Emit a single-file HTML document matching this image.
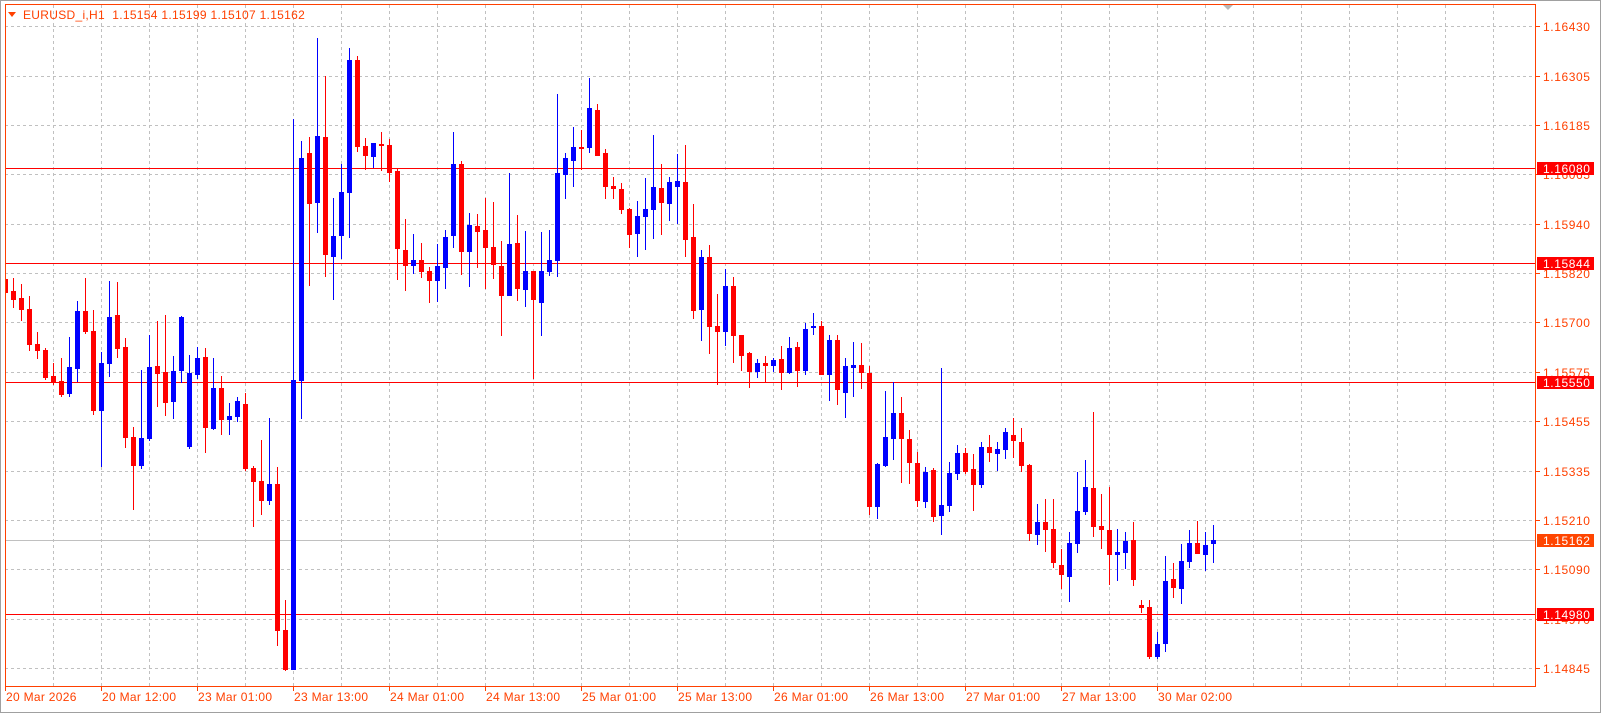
<!DOCTYPE html>
<html><head><meta charset="utf-8"><style>
html,body{margin:0;padding:0;background:#fff;}
svg{display:block;font-family:"Liberation Sans",sans-serif;}
</style></head><body>
<svg width="1601" height="713" viewBox="0 0 1601 713" xmlns="http://www.w3.org/2000/svg">
<rect x="0" y="0" width="1601" height="713" fill="#fff"/>
<rect x="0.5" y="0.5" width="1600" height="712" fill="none" stroke="#a0a0a0"/>
<defs><clipPath id="pc"><rect x="5" y="4" width="1531" height="683"/></clipPath></defs>
<g stroke="#c0c0c0" stroke-width="1" stroke-dasharray="3,3">
<path d="M5 26.5H1536M5 76.5H1536M5 125.5H1536M5 174.5H1536M5 224.5H1536M5 273.5H1536M5 322.5H1536M5 372.5H1536M5 421.5H1536M5 471.5H1536M5 520.5H1536M5 569.5H1536M5 619.5H1536M5 668.5H1536"/>
<path d="M53.5 5V687M101.5 5V687M149.5 5V687M197.5 5V687M245.5 5V687M293.5 5V687M341.5 5V687M389.5 5V687M437.5 5V687M485.5 5V687M533.5 5V687M581.5 5V687M629.5 5V687M677.5 5V687M725.5 5V687M773.5 5V687M821.5 5V687M869.5 5V687M917.5 5V687M965.5 5V687M1013.5 5V687M1061.5 5V687M1109.5 5V687M1157.5 5V687M1205.5 5V687M1253.5 5V687M1301.5 5V687M1349.5 5V687M1397.5 5V687M1445.5 5V687M1493.5 5V687"/>
</g>
<path d="M5 540.5H1536" stroke="#c0c0c0"/>
<g stroke="#ff0000" stroke-width="1">
<path d="M5 168.5H1536M5 263.5H1536M5 382.5H1536M5 614.5H1536"/>
</g>
<g clip-path="url(#pc)">
<g fill="#ff0000">
<rect x="5" y="223" width="1" height="72"/><rect x="3" y="279" width="5" height="14"/>
<rect x="13" y="278" width="1" height="30"/><rect x="11" y="291" width="5" height="9"/>
<rect x="21" y="284" width="1" height="37"/><rect x="19" y="298" width="5" height="12"/>
<rect x="29" y="296" width="1" height="55"/><rect x="27" y="309" width="5" height="36"/>
<rect x="37" y="332" width="1" height="27"/><rect x="35" y="344" width="5" height="7"/>
<rect x="45" y="348" width="1" height="32"/><rect x="43" y="350" width="5" height="28"/>
<rect x="53" y="363" width="1" height="22"/><rect x="51" y="376" width="5" height="6"/>
<rect x="61" y="358" width="1" height="39"/><rect x="59" y="381" width="5" height="14"/>
<rect x="85" y="278" width="1" height="56"/><rect x="83" y="311" width="5" height="21"/>
<rect x="93" y="310" width="1" height="105"/><rect x="91" y="331" width="5" height="80"/>
<rect x="117" y="282" width="1" height="76"/><rect x="115" y="315" width="5" height="34"/>
<rect x="125" y="338" width="1" height="110"/><rect x="123" y="347" width="5" height="91"/>
<rect x="133" y="427" width="1" height="83"/><rect x="131" y="437" width="5" height="29"/>
<rect x="157" y="321" width="1" height="86"/><rect x="155" y="366" width="5" height="8"/>
<rect x="165" y="315" width="1" height="101"/><rect x="163" y="372" width="5" height="31"/>
<rect x="205" y="348" width="1" height="105"/><rect x="203" y="357" width="5" height="71"/>
<rect x="221" y="376" width="1" height="59"/><rect x="219" y="388" width="5" height="32"/>
<rect x="245" y="393" width="1" height="78"/><rect x="243" y="404" width="5" height="65"/>
<rect x="253" y="466" width="1" height="61"/><rect x="251" y="468" width="5" height="14"/>
<rect x="261" y="440" width="1" height="75"/><rect x="259" y="481" width="5" height="20"/>
<rect x="277" y="467" width="1" height="179"/><rect x="275" y="484" width="5" height="147"/>
<rect x="285" y="600" width="1" height="71"/><rect x="283" y="630" width="5" height="40"/>
<rect x="309" y="137" width="1" height="149"/><rect x="307" y="153" width="5" height="51"/>
<rect x="325" y="76" width="1" height="201"/><rect x="323" y="137" width="5" height="118"/>
<rect x="357" y="56" width="1" height="96"/><rect x="355" y="60" width="5" height="87"/>
<rect x="365" y="138" width="1" height="32"/><rect x="363" y="146" width="5" height="10"/>
<rect x="381" y="132" width="1" height="39"/><rect x="379" y="144" width="5" height="2"/>
<rect x="389" y="139" width="1" height="43"/><rect x="387" y="145" width="5" height="28"/>
<rect x="397" y="168" width="1" height="112"/><rect x="395" y="171" width="5" height="78"/>
<rect x="405" y="219" width="1" height="72"/><rect x="403" y="250" width="5" height="16"/>
<rect x="421" y="243" width="1" height="35"/><rect x="419" y="260" width="5" height="12"/>
<rect x="429" y="267" width="1" height="36"/><rect x="427" y="271" width="5" height="10"/>
<rect x="461" y="161" width="1" height="114"/><rect x="459" y="164" width="5" height="88"/>
<rect x="477" y="214" width="1" height="54"/><rect x="475" y="226" width="5" height="6"/>
<rect x="485" y="198" width="1" height="91"/><rect x="483" y="230" width="5" height="18"/>
<rect x="493" y="202" width="1" height="77"/><rect x="491" y="247" width="5" height="18"/>
<rect x="501" y="241" width="1" height="95"/><rect x="499" y="266" width="5" height="30"/>
<rect x="517" y="215" width="1" height="86"/><rect x="515" y="243" width="5" height="46"/>
<rect x="533" y="271" width="1" height="108"/><rect x="531" y="271" width="5" height="29"/>
<rect x="581" y="130" width="1" height="40"/><rect x="579" y="147" width="5" height="2"/>
<rect x="597" y="104" width="1" height="52"/><rect x="595" y="110" width="5" height="46"/>
<rect x="605" y="149" width="1" height="50"/><rect x="603" y="153" width="5" height="34"/>
<rect x="613" y="177" width="1" height="22"/><rect x="611" y="186" width="5" height="3"/>
<rect x="621" y="183" width="1" height="31"/><rect x="619" y="189" width="5" height="21"/>
<rect x="629" y="208" width="1" height="40"/><rect x="627" y="209" width="5" height="26"/>
<rect x="661" y="164" width="1" height="71"/><rect x="659" y="188" width="5" height="15"/>
<rect x="685" y="145" width="1" height="112"/><rect x="683" y="182" width="5" height="58"/>
<rect x="693" y="204" width="1" height="115"/><rect x="691" y="237" width="5" height="74"/>
<rect x="709" y="245" width="1" height="109"/><rect x="707" y="257" width="5" height="70"/>
<rect x="717" y="294" width="1" height="91"/><rect x="715" y="326" width="5" height="6"/>
<rect x="733" y="277" width="1" height="86"/><rect x="731" y="286" width="5" height="50"/>
<rect x="741" y="335" width="1" height="36"/><rect x="739" y="335" width="5" height="21"/>
<rect x="749" y="352" width="1" height="36"/><rect x="747" y="353" width="5" height="19"/>
<rect x="765" y="356" width="1" height="27"/><rect x="763" y="363" width="5" height="3"/>
<rect x="781" y="346" width="1" height="44"/><rect x="779" y="359" width="5" height="14"/>
<rect x="797" y="342" width="1" height="45"/><rect x="795" y="347" width="5" height="24"/>
<rect x="821" y="321" width="1" height="54"/><rect x="819" y="326" width="5" height="49"/>
<rect x="837" y="335" width="1" height="70"/><rect x="835" y="340" width="5" height="50"/>
<rect x="861" y="343" width="1" height="46"/><rect x="859" y="365" width="5" height="8"/>
<rect x="869" y="366" width="1" height="149"/><rect x="867" y="373" width="5" height="134"/>
<rect x="901" y="397" width="1" height="86"/><rect x="899" y="413" width="5" height="26"/>
<rect x="909" y="430" width="1" height="54"/><rect x="907" y="439" width="5" height="24"/>
<rect x="917" y="452" width="1" height="55"/><rect x="915" y="463" width="5" height="38"/>
<rect x="933" y="468" width="1" height="54"/><rect x="931" y="470" width="5" height="47"/>
<rect x="965" y="448" width="1" height="26"/><rect x="963" y="453" width="5" height="19"/>
<rect x="973" y="454" width="1" height="57"/><rect x="971" y="469" width="5" height="16"/>
<rect x="989" y="435" width="1" height="27"/><rect x="987" y="447" width="5" height="6"/>
<rect x="1013" y="418" width="1" height="40"/><rect x="1011" y="435" width="5" height="6"/>
<rect x="1021" y="428" width="1" height="44"/><rect x="1019" y="442" width="5" height="24"/>
<rect x="1029" y="464" width="1" height="77"/><rect x="1027" y="465" width="5" height="69"/>
<rect x="1045" y="499" width="1" height="53"/><rect x="1043" y="522" width="5" height="8"/>
<rect x="1053" y="499" width="1" height="69"/><rect x="1051" y="529" width="5" height="34"/>
<rect x="1061" y="549" width="1" height="40"/><rect x="1059" y="565" width="5" height="10"/>
<rect x="1093" y="412" width="1" height="125"/><rect x="1091" y="488" width="5" height="39"/>
<rect x="1101" y="494" width="1" height="55"/><rect x="1099" y="526" width="5" height="4"/>
<rect x="1109" y="487" width="1" height="98"/><rect x="1107" y="530" width="5" height="25"/>
<rect x="1133" y="522" width="1" height="64"/><rect x="1131" y="540" width="5" height="40"/>
<rect x="1141" y="600" width="1" height="13"/><rect x="1139" y="605" width="5" height="3"/>
<rect x="1149" y="600" width="1" height="59"/><rect x="1147" y="607" width="5" height="50"/>
<rect x="1173" y="563" width="1" height="35"/><rect x="1171" y="579" width="5" height="9"/>
<rect x="1197" y="521" width="1" height="33"/><rect x="1195" y="543" width="5" height="11"/>
</g>
<g fill="#0000ff">
<rect x="69" y="337" width="1" height="60"/><rect x="67" y="367" width="5" height="27"/>
<rect x="77" y="301" width="1" height="81"/><rect x="75" y="311" width="5" height="58"/>
<rect x="101" y="352" width="1" height="115"/><rect x="99" y="363" width="5" height="48"/>
<rect x="109" y="281" width="1" height="96"/><rect x="107" y="317" width="5" height="47"/>
<rect x="141" y="370" width="1" height="99"/><rect x="139" y="438" width="5" height="28"/>
<rect x="149" y="335" width="1" height="106"/><rect x="147" y="367" width="5" height="72"/>
<rect x="173" y="356" width="1" height="63"/><rect x="171" y="371" width="5" height="31"/>
<rect x="181" y="316" width="1" height="67"/><rect x="179" y="317" width="5" height="54"/>
<rect x="189" y="355" width="1" height="94"/><rect x="187" y="373" width="5" height="74"/>
<rect x="197" y="347" width="1" height="32"/><rect x="195" y="358" width="5" height="17"/>
<rect x="213" y="358" width="1" height="72"/><rect x="211" y="388" width="5" height="41"/>
<rect x="229" y="403" width="1" height="32"/><rect x="227" y="416" width="5" height="4"/>
<rect x="237" y="397" width="1" height="25"/><rect x="235" y="401" width="5" height="16"/>
<rect x="269" y="418" width="1" height="87"/><rect x="267" y="484" width="5" height="17"/>
<rect x="293" y="119" width="1" height="551"/><rect x="291" y="380" width="5" height="290"/>
<rect x="301" y="141" width="1" height="278"/><rect x="299" y="158" width="5" height="223"/>
<rect x="317" y="38" width="1" height="195"/><rect x="315" y="136" width="5" height="67"/>
<rect x="333" y="198" width="1" height="102"/><rect x="331" y="236" width="5" height="21"/>
<rect x="341" y="164" width="1" height="95"/><rect x="339" y="192" width="5" height="44"/>
<rect x="349" y="48" width="1" height="190"/><rect x="347" y="60" width="5" height="133"/>
<rect x="373" y="143" width="1" height="25"/><rect x="371" y="143" width="5" height="14"/>
<rect x="413" y="234" width="1" height="40"/><rect x="411" y="260" width="5" height="6"/>
<rect x="437" y="244" width="1" height="58"/><rect x="435" y="266" width="5" height="15"/>
<rect x="445" y="230" width="1" height="59"/><rect x="443" y="237" width="5" height="31"/>
<rect x="453" y="132" width="1" height="116"/><rect x="451" y="164" width="5" height="72"/>
<rect x="469" y="213" width="1" height="74"/><rect x="467" y="225" width="5" height="27"/>
<rect x="509" y="173" width="1" height="123"/><rect x="507" y="244" width="5" height="52"/>
<rect x="525" y="231" width="1" height="76"/><rect x="523" y="271" width="5" height="19"/>
<rect x="541" y="232" width="1" height="104"/><rect x="539" y="271" width="5" height="32"/>
<rect x="549" y="230" width="1" height="46"/><rect x="547" y="260" width="5" height="12"/>
<rect x="557" y="94" width="1" height="183"/><rect x="555" y="173" width="5" height="88"/>
<rect x="565" y="153" width="1" height="46"/><rect x="563" y="158" width="5" height="17"/>
<rect x="573" y="127" width="1" height="60"/><rect x="571" y="147" width="5" height="14"/>
<rect x="589" y="78" width="1" height="75"/><rect x="587" y="108" width="5" height="40"/>
<rect x="637" y="201" width="1" height="56"/><rect x="635" y="216" width="5" height="18"/>
<rect x="645" y="178" width="1" height="72"/><rect x="643" y="209" width="5" height="8"/>
<rect x="653" y="135" width="1" height="104"/><rect x="651" y="187" width="5" height="23"/>
<rect x="669" y="177" width="1" height="44"/><rect x="667" y="182" width="5" height="22"/>
<rect x="677" y="154" width="1" height="70"/><rect x="675" y="181" width="5" height="6"/>
<rect x="701" y="250" width="1" height="91"/><rect x="699" y="257" width="5" height="53"/>
<rect x="725" y="269" width="1" height="77"/><rect x="723" y="286" width="5" height="46"/>
<rect x="757" y="359" width="1" height="19"/><rect x="755" y="363" width="5" height="9"/>
<rect x="773" y="358" width="1" height="14"/><rect x="771" y="360" width="5" height="6"/>
<rect x="789" y="337" width="1" height="37"/><rect x="787" y="348" width="5" height="25"/>
<rect x="805" y="323" width="1" height="52"/><rect x="803" y="329" width="5" height="42"/>
<rect x="813" y="313" width="1" height="22"/><rect x="811" y="326" width="5" height="2"/>
<rect x="829" y="335" width="1" height="66"/><rect x="827" y="340" width="5" height="35"/>
<rect x="845" y="358" width="1" height="60"/><rect x="843" y="366" width="5" height="27"/>
<rect x="853" y="342" width="1" height="55"/><rect x="851" y="365" width="5" height="3"/>
<rect x="877" y="463" width="1" height="56"/><rect x="875" y="464" width="5" height="43"/>
<rect x="885" y="391" width="1" height="76"/><rect x="883" y="437" width="5" height="29"/>
<rect x="893" y="382" width="1" height="78"/><rect x="891" y="413" width="5" height="26"/>
<rect x="925" y="467" width="1" height="41"/><rect x="923" y="472" width="5" height="30"/>
<rect x="941" y="368" width="1" height="167"/><rect x="939" y="505" width="5" height="11"/>
<rect x="949" y="462" width="1" height="50"/><rect x="947" y="473" width="5" height="33"/>
<rect x="957" y="445" width="1" height="35"/><rect x="955" y="453" width="5" height="21"/>
<rect x="981" y="442" width="1" height="46"/><rect x="979" y="447" width="5" height="38"/>
<rect x="997" y="442" width="1" height="29"/><rect x="995" y="449" width="5" height="5"/>
<rect x="1005" y="428" width="1" height="31"/><rect x="1003" y="432" width="5" height="18"/>
<rect x="1037" y="504" width="1" height="41"/><rect x="1035" y="522" width="5" height="13"/>
<rect x="1069" y="532" width="1" height="70"/><rect x="1067" y="543" width="5" height="34"/>
<rect x="1077" y="472" width="1" height="81"/><rect x="1075" y="511" width="5" height="33"/>
<rect x="1085" y="460" width="1" height="55"/><rect x="1083" y="487" width="5" height="25"/>
<rect x="1117" y="529" width="1" height="52"/><rect x="1115" y="552" width="5" height="3"/>
<rect x="1125" y="532" width="1" height="37"/><rect x="1123" y="541" width="5" height="12"/>
<rect x="1157" y="632" width="1" height="27"/><rect x="1155" y="644" width="5" height="13"/>
<rect x="1165" y="556" width="1" height="96"/><rect x="1163" y="581" width="5" height="63"/>
<rect x="1181" y="544" width="1" height="60"/><rect x="1179" y="561" width="5" height="28"/>
<rect x="1189" y="530" width="1" height="38"/><rect x="1187" y="543" width="5" height="19"/>
<rect x="1205" y="532" width="1" height="39"/><rect x="1203" y="545" width="5" height="10"/>
<rect x="1213" y="525" width="1" height="38"/><rect x="1211" y="540" width="5" height="4"/>
</g>
</g>
<rect x="5.5" y="4.5" width="1530" height="682" fill="none" stroke="#ff4000" stroke-width="1"/>
<polygon points="1223,5 1233,5 1228,10" fill="#b8b8b8"/>
<polygon points="8,12 16,12 12,17" fill="#ff4000"/>
<text x="23" y="19" font-size="12" fill="#ff4000" letter-spacing="0.3" xml:space="preserve" style="white-space:pre">EURUSD_i,H1  1.15154 1.15199 1.15107 1.15162</text>
<g stroke="#ff4000">
<path d="M1536 26.5h4M1536 76.5h4M1536 125.5h4M1536 174.5h4M1536 224.5h4M1536 273.5h4M1536 322.5h4M1536 372.5h4M1536 421.5h4M1536 471.5h4M1536 520.5h4M1536 569.5h4M1536 619.5h4M1536 668.5h4"/>
<path d="M5.5 687v4M101.5 687v4M197.5 687v4M293.5 687v4M389.5 687v4M485.5 687v4M581.5 687v4M677.5 687v4M773.5 687v4M869.5 687v4M965.5 687v4M1061.5 687v4M1157.5 687v4"/>
</g>
<g font-size="12" fill="#ff4000" letter-spacing="0.6">
<text x="1543" y="31">1.16430</text>
<text x="1543" y="81">1.16305</text>
<text x="1543" y="130">1.16185</text>
<text x="1543" y="179">1.16065</text>
<text x="1543" y="229">1.15940</text>
<text x="1543" y="278">1.15820</text>
<text x="1543" y="327">1.15700</text>
<text x="1543" y="377">1.15575</text>
<text x="1543" y="426">1.15455</text>
<text x="1543" y="476">1.15335</text>
<text x="1543" y="525">1.15210</text>
<text x="1543" y="574">1.15090</text>
<text x="1543" y="624">1.14970</text>
<text x="1543" y="673">1.14845</text>
</g>
<g>
<rect x="1537" y="162" width="57" height="13" fill="#ff0000"/>
<rect x="1537" y="257" width="57" height="13" fill="#ff0000"/>
<rect x="1537" y="376" width="57" height="13" fill="#ff0000"/>
<rect x="1537" y="608" width="57" height="13" fill="#ff0000"/>
<rect x="1537" y="534" width="57" height="13" fill="#ff4500"/>
</g>
<g font-size="12" fill="#ffffff" letter-spacing="0.6">
<text x="1543" y="173">1.16080</text>
<text x="1543" y="268">1.15844</text>
<text x="1543" y="387">1.15550</text>
<text x="1543" y="619">1.14980</text>
<text x="1543" y="545">1.15162</text>
</g>
<g font-size="12" fill="#ff4000" letter-spacing="0.3">
<text x="6" y="701">20 Mar 2026</text>
<text x="102" y="701">20 Mar 12:00</text>
<text x="198" y="701">23 Mar 01:00</text>
<text x="294" y="701">23 Mar 13:00</text>
<text x="390" y="701">24 Mar 01:00</text>
<text x="486" y="701">24 Mar 13:00</text>
<text x="582" y="701">25 Mar 01:00</text>
<text x="678" y="701">25 Mar 13:00</text>
<text x="774" y="701">26 Mar 01:00</text>
<text x="870" y="701">26 Mar 13:00</text>
<text x="966" y="701">27 Mar 01:00</text>
<text x="1062" y="701">27 Mar 13:00</text>
<text x="1158" y="701">30 Mar 02:00</text>
</g>
</svg>
</body></html>
